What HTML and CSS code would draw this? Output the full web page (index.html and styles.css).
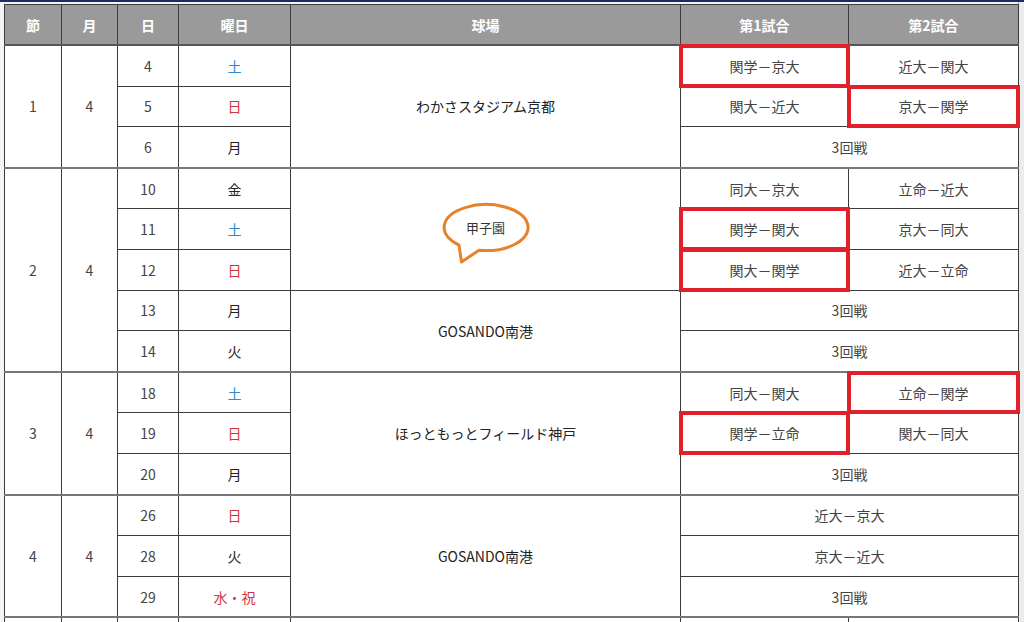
FILE: index.html
```html
<!DOCTYPE html>
<html lang="ja">
<head>
<meta charset="utf-8">
<title>日程</title>
<link rel="stylesheet" href="styles.css">
</head>
<body>
<div class="page">
<table class="schedule">
<colgroup>
<col class="c-sec"><col class="c-mon"><col class="c-day"><col class="c-wd"><col class="c-venue"><col class="c-g1"><col class="c-g2">
</colgroup>
<thead>
<tr><th>節</th><th>月</th><th>日</th><th>曜日</th><th>球場</th><th>第1試合</th><th>第2試合</th></tr>
</thead>
<tbody class="sec">
<tr><td rowspan="3">1</td><td rowspan="3">4</td><td>4</td><td class="sat">土</td><td rowspan="3" class="venue">わかさスタジアム京都</td><td class="hl">関学－京大</td><td>近大－関大</td></tr>
<tr><td>5</td><td class="sun">日</td><td>関大－近大</td><td class="hl">京大－関学</td></tr>
<tr><td>6</td><td class="wd">月</td><td colspan="2">3回戦</td></tr>
</tbody>
<tbody class="sec">
<tr><td rowspan="5">2</td><td rowspan="5">4</td><td>10</td><td class="wd">金</td><td rowspan="3" class="venue"><span class="bubble"><svg class="bubble-shape" viewBox="0 0 100 70" width="100" height="70" aria-hidden="true"><path d="M43 52.2 A42 23 0 1 0 23 47.1 L25.5 64 Z" fill="#fff" stroke="#e8822a" stroke-width="3" stroke-linejoin="round"/></svg><span class="bubble-text">甲子園</span></span></td><td>同大－京大</td><td>立命－近大</td></tr>
<tr><td>11</td><td class="sat">土</td><td class="hl">関学－関大</td><td>京大－同大</td></tr>
<tr><td>12</td><td class="sun">日</td><td class="hl">関大－関学</td><td>近大－立命</td></tr>
<tr><td>13</td><td class="wd">月</td><td rowspan="2" class="venue">GOSANDO南港</td><td colspan="2">3回戦</td></tr>
<tr><td>14</td><td class="wd">火</td><td colspan="2">3回戦</td></tr>
</tbody>
<tbody class="sec">
<tr><td rowspan="3">3</td><td rowspan="3">4</td><td>18</td><td class="sat">土</td><td rowspan="3" class="venue">ほっともっとフィールド神戸</td><td>同大－関大</td><td class="hl">立命－関学</td></tr>
<tr><td>19</td><td class="sun">日</td><td class="hl">関学－立命</td><td>関大－同大</td></tr>
<tr><td>20</td><td class="wd">月</td><td colspan="2">3回戦</td></tr>
</tbody>
<tbody class="sec">
<tr><td rowspan="3">4</td><td rowspan="3">4</td><td>26</td><td class="sun">日</td><td rowspan="3" class="venue">GOSANDO南港</td><td colspan="2">近大－京大</td></tr>
<tr><td>28</td><td class="wd">火</td><td colspan="2">京大－近大</td></tr>
<tr><td>29</td><td class="sun">水・祝</td><td colspan="2">3回戦</td></tr>
</tbody>
<tbody class="sec">
<tr><td></td><td></td><td></td><td></td><td></td><td></td><td></td></tr>
</tbody>
</table>
</div>
</body>
</html>
```

FILE: styles.css
```css
html, body {
  margin: 0;
  padding: 0;
  height: 622px;
  overflow: hidden;
  background: #ececec;
}

body {
  border-top: 2px solid #1f2a6e;
  font-family: "Noto Sans CJK JP", "Noto Sans", sans-serif;
  font-size: 14px;
  color: #444;
}

.page {
  width: 1014px;
  padding: 2px 0 0 4px;
  border-right: 1px solid #a8a8a8;
  background: #f4f4f4;
  height: 100%;
}

.schedule {
  width: 1014px;
  table-layout: fixed;
  border-collapse: collapse;
  background: #fff;
}

.c-sec { width: 57px; }
.c-mon { width: 56px; }
.c-day { width: 61px; }
.c-wd { width: 112px; }
.c-venue { width: 390px; }
.c-g1 { width: 168px; }
.c-g2 { width: 170px; }

.schedule th {
  height: 39px;
  padding: 0;
  background: #9a9a9a;
  color: #fff;
  font-weight: 700;
  font-size: 14px;
  border: 1px solid #3c3c3c;
  border-bottom: 2px solid #555;
}

.schedule td {
  height: 39.6px;
  padding: 0;
  text-align: center;
  vertical-align: middle;
  border: 1px solid #3c3c3c;
  line-height: 20px;
}

.schedule tbody.sec + tbody.sec tr:first-child td {
  border-top: 2px solid #777;
}

.sat { color: #2b8bd0; }
.sun { color: #d1363d; }
.wd { color: #222; }
.venue { color: #222; }

.hl {
  position: relative;
}

.hl::after {
  content: "";
  position: absolute;
  inset: -2px;
  border: 4px solid #e0212b;
  pointer-events: none;
}

.bubble {
  position: relative;
  display: inline-block;
  width: 84px;
  height: 46px;
  line-height: 46px;
  margin-top: -4px;
  vertical-align: middle;
}

.bubble-shape {
  position: absolute;
  left: -8px;
  top: -6.5px;
}

.bubble-text {
  position: relative;
  font-size: 13px;
  color: #333;
}
```
